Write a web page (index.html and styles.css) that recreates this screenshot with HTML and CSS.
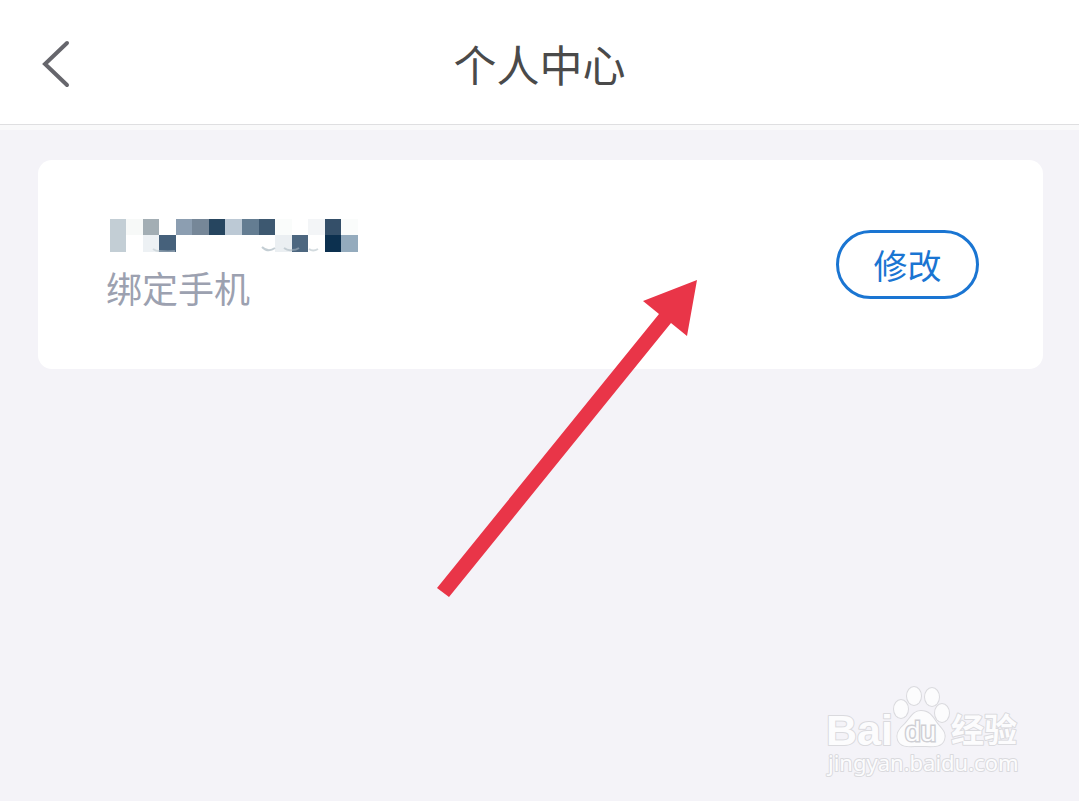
FILE: index.html
```html
<!DOCTYPE html>
<html lang="zh-CN">
<head>
<meta charset="utf-8">
<meta name="viewport" content="width=device-width, initial-scale=1">
<title>个人中心</title>
<link rel="stylesheet" href="styles.css">
</head>
<body>
<header class="header">
  <button class="back" type="button" aria-label="返回">
    <svg width="32" height="50" viewBox="0 0 32 50" aria-hidden="true"><path d="M27 5 5 26 27 47" fill="none" stroke="#66666c" stroke-width="4" stroke-linecap="round" stroke-linejoin="miter"/></svg>
  </button>
  <h1 class="title">个人中心</h1>
</header>
<main class="content">
  <section class="card">
    <div class="info">
      <svg class="mosaic" width="248" height="33" viewBox="0 0 248 33" shape-rendering="crispEdges" aria-hidden="true">
        <path fill="#c3ced5" d="M0 0h16v33H0z"/>
        <path fill="#f7f9f8" d="M16 0h17v16H16z"/>
        <path fill="#a3aeb4" d="M33 0h16v16H33z"/>
        <path fill="#edf1f4" d="M33 16h16v17H33z"/>
        <path fill="#46617b" d="M49 16h17v17H49z"/>
        <path fill="#8c9eb1" d="M66 0h16v16H66z"/>
        <path fill="#768798" d="M82 0h17v16H82z"/>
        <path fill="#26455f" d="M99 0h16v16H99z"/>
        <path fill="#bcc9d5" d="M115 0h17v16H115z"/>
        <path fill="#647d92" d="M132 0h17v16H132z"/>
        <path fill="#3d5870" d="M149 0h16v16H149z"/>
        <path fill="#fafcfb" d="M165 0h17v16H165z"/>
        <path fill="#ebeff2" d="M165 16h17v17H165z"/>
        <path fill="#4d6780" d="M182 16h16v17H182z"/>
        <path fill="#f3f5f7" d="M198 0h17v16H198z"/>
        <path fill="#344f69" d="M215 0h16v16H215z"/>
        <path fill="#0c304f" d="M215 16h16v17H215z"/>
        <path fill="#fafcfb" d="M231 0h17v16H231z"/>
        <path fill="#94abbd" d="M231 16h17v17H231z"/>
        <g fill="none" stroke-width="2" shape-rendering="auto">
          <path stroke="#c4ced4" d="M152 28q6 6 13 1"/>
          <path stroke="#c4ced4" d="M174 29q4 3 8 2"/>
          <path stroke="#8295a6" d="M182 31q4 0 7-2"/>
          <path stroke="#d2dade" d="M43 30q3 2 6 2M199 30q4 3 9 0"/>
          <path stroke="#8295a6" d="M49 32q10 1 16 0"/>
        </g>
      </svg>
      <p class="label">绑定手机</p>
    </div>
    <button class="edit" type="button">修改</button>
  </section>
</main>
<svg class="arrow" width="264" height="322" viewBox="0 0 264 322" aria-hidden="true"><path fill="#e93548" d="M4 311 226 37 210 24 264 3 254 59 238 46 16 320z"/></svg>
<svg class="watermark" width="220" height="110" viewBox="0 0 220 110" role="img" aria-label="Baidu 经验">
  <g class="mark">
    <text class="mark-bai" x="11" y="70">Bai</text>
    <ellipse cx="86" cy="34" rx="7" ry="9"/>
    <ellipse cx="99" cy="21" rx="7" ry="9"/>
    <ellipse cx="117" cy="22" rx="7" ry="9"/>
    <ellipse cx="127" cy="38" rx="7" ry="9"/>
    <path d="M106 36C98 36 95 44 90 49C84 54 81 59 83 65C86 73 95 71 105 71C117 71 126 73 129 65C132 57 125 53 121 47C117 41 114 36 106 36z"/>
    <text class="mark-cn" x="136" y="67">经验</text>
    <text class="mark-url" x="13" y="96">jingyan.baidu.com</text>
  </g>
  <text class="mark-du" x="90" y="66">du</text>
</svg>
</body>
</html>
```
FILE: styles.css
```css
* {
  box-sizing: border-box;
}

body {
  position: relative;
  min-height: 100vh;
  margin: 0;
  background: #f4f3f8;
  font-family: "Noto Sans CJK SC", sans-serif;
}

.header {
  display: grid;
  grid-template-columns: 120px 1fr 120px;
  align-items: center;
  height: 125px;
  background: #fff;
  border-bottom: 1px solid #dfdfe1;
  box-shadow: 0 5px 0 #f9f9fa;
}

.back {
  display: flex;
  width: 72px;
  padding: 2px 0 0 40px;
  border: 0;
  background: none;
}

.back svg {
  flex: none;
}

.title {
  margin: 0;
  padding-top: 2px;
  color: #4a4a4a;
  font-size: 43px;
  font-weight: 400;
  line-height: 60px;
  text-align: center;
}

.content {
  padding: 35px 36px 0 38px;
}

.card {
  display: flex;
  align-items: center;
  justify-content: space-between;
  padding: 56px 64px 56px 68px;
  border-radius: 14px;
  background: #fff;
}

.mosaic {
  display: block;
  margin: 3px 4px 9px;
}

.label {
  margin: 0;
  color: #9ca1b0;
  font-size: 36px;
  line-height: 52px;
}

.edit {
  width: 143px;
  height: 69px;
  padding: 0;
  border: 3px solid #1a75d2;
  border-radius: 35px;
  background: #fff;
  color: #1a75d2;
  font-family: inherit;
  font-size: 34px;
  line-height: 60px;
}

.arrow {
  position: absolute;
  top: 277px;
  left: 433px;
  pointer-events: none;
}

.watermark {
  position: absolute;
  right: 44px;
  bottom: 16px;
}

.mark {
  fill: #fcfcfd;
  stroke: #dadade;
  stroke-width: 2px;
  stroke-linejoin: round;
  paint-order: stroke;
}

.mark-bai {
  font: 700 43px "Liberation Sans", sans-serif;
}

.mark-cn {
  font: 700 33px "Noto Sans CJK SC", sans-serif;
}

.mark-url {
  font: 400 22px "Noto Sans", sans-serif;
}

.mark-du {
  fill: #fcfcfd;
  stroke: #cfcfd4;
  stroke-width: 3px;
  paint-order: stroke;
  font: 400 28px "Liberation Sans", sans-serif;
}
```
